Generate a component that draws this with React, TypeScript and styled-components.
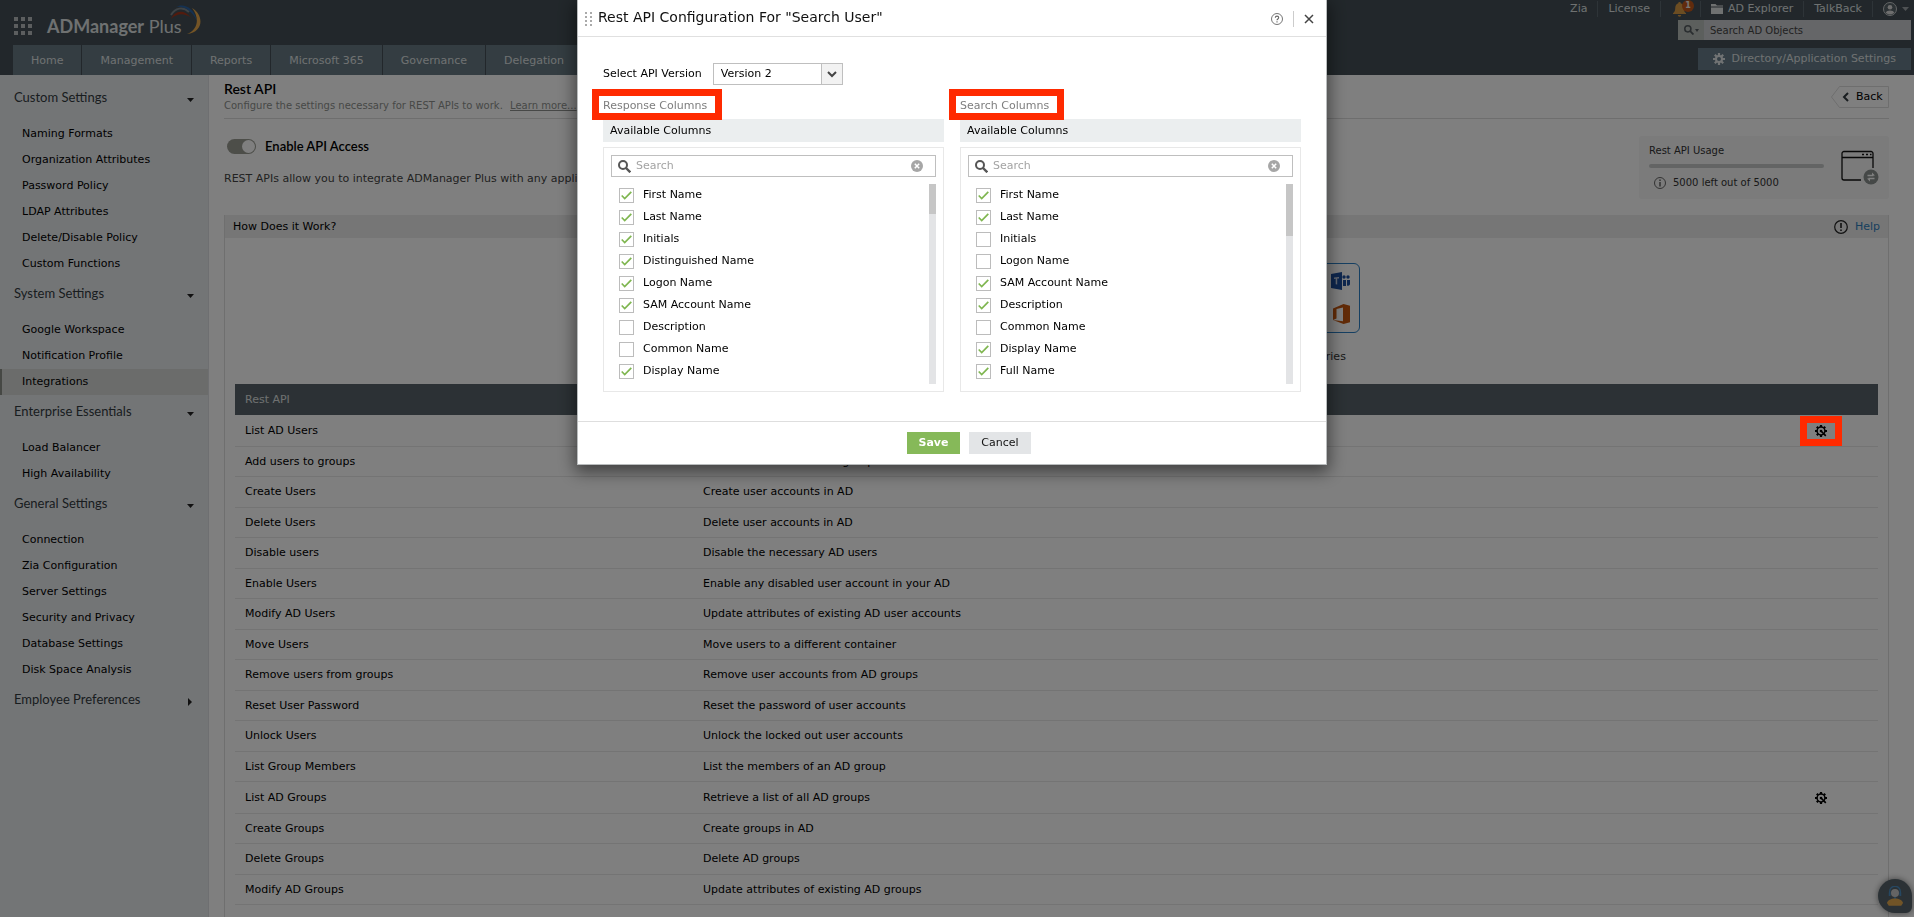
import React from 'react';
import styled, { createGlobalStyle } from 'styled-components';

const sans = '"DejaVu Sans", Verdana, sans-serif';
const display = 'Lato, "Open Sans", sans-serif';

const GlobalStyle = createGlobalStyle`
  * { box-sizing: border-box; }
  body {
    margin: 0;
    font-family: ${sans};
    font-size: 11px;
    line-height: 16px;
    color: #000;
    background: #fff;
  }
  button, input, select { font: inherit; color: inherit; margin: 0; }
  a { color: inherit; text-decoration: none; }
  ul { list-style: none; margin: 0; padding: 0; }
  h1, h2, p { margin: 0; font-weight: 400; }
  svg { display: block; }
`;

/* ---------- page shell ---------- */

const Page = styled.div`
  display: flex;
  flex-direction: column;
  min-height: 100vh;
`;

const Header = styled.header`
  display: flex;
  justify-content: space-between;
  height: 75px;
  background: #444f56;
  color: #dfe2e3;
`;

const HeaderLeft = styled.div`
  display: flex;
  flex-direction: column;
  justify-content: space-between;
  padding-left: 13px;
`;

const Brand = styled.div`
  display: flex;
  align-items: flex-start;
  padding-top: 4px;
`;

const AppsButton = styled.button`
  border: 0;
  padding: 0 1px;
  margin-top: 13px;
  background: none;
`;

const BrandName = styled.span`
  margin: 10px 0 0 14px;
  font-family: ${display};
  font-size: 18px;
  line-height: 24px;
  white-space: nowrap;
  b { font-weight: 700; }
`;

const BrandArc = styled.svg`
  margin-left: -12px;
`;

const Tabs = styled.nav`
  display: flex;
  gap: 1px;
`;

const Tab = styled.a`
  padding: 8px 18px 6px;
  background: #687a84;
`;

const HeaderRight = styled.div`
  display: flex;
  flex-direction: column;
  align-items: flex-end;
  padding-right: 3px;
`;

const UtilityBar = styled.div`
  display: flex;
  align-items: center;
  height: 18px;
  margin-bottom: 2px;
`;

const UtilityItem = styled.a`
  display: flex;
  align-items: center;
  gap: 5px;
  height: 16px;
  padding: 0 10px;
  border-left: 1px solid #5c6970;
  &:first-child { border-left: 0; }
  &:last-child { padding-right: 2px; }
`;

const BellWrap = styled.span`
  display: flex;
  position: relative;
  width: 18px;
  margin: 0 -1px 0 2px;
`;

const BellCount = styled.span`
  position: absolute;
  left: 9px;
  top: -2px;
  width: 12px;
  height: 12px;
  border-radius: 6px;
  background: #c2571a;
  color: #eee;
  font-size: 8px;
  line-height: 12px;
  font-weight: 700;
  text-align: center;
`;

const GlobalSearch = styled.form`
  display: flex;
  width: 233px;
  height: 20px;
  background: #cbcdd0;
`;

const GlobalSearchScope = styled.button`
  display: flex;
  align-items: center;
  justify-content: center;
  gap: 1px;
  width: 26px;
  border: 0;
  padding: 0;
  background: #b9beba;
`;

const GlobalSearchInput = styled.input`
  flex: 1;
  min-width: 0;
  border: 0;
  padding: 2px 6px 0;
  background: none;
  font-size: 10px;
  &::placeholder { color: #444; opacity: 1; }
`;

const SettingsButton = styled.button`
  display: flex;
  align-items: center;
  gap: 7px;
  height: 22px;
  margin-top: 8px;
  padding: 0 15px;
  border: 0;
  background: #687d8a;
`;

const Body = styled.div`
  display: flex;
  flex: 1;
`;

/* ---------- sidebar ---------- */

const Sidebar = styled.nav`
  flex: 0 0 209px;
  padding-top: 6px;
  background: #e7eaed;
  border-right: 1px solid #dcdfe2;
`;

const GroupHeading = styled.button`
  display: flex;
  align-items: center;
  justify-content: space-between;
  width: 100%;
  height: 40px;
  padding: 0 14px 8px;
  border: 0;
  background: none;
  color: #333b3f;
  font-family: ${display};
  font-size: 13px;
  svg { margin-top: 4px; }
`;

const SideLink = styled.a<{ $active?: boolean }>`
  display: block;
  height: 26px;
  padding: 5px 20px;
  border-left: 2px solid ${p => (p.$active ? '#8c9088' : 'transparent')};
  background: ${p => (p.$active ? '#d6d9d7' : 'none')};
`;

/* ---------- main ---------- */

const Main = styled.main`
  display: flex;
  flex-direction: column;
  flex: 1;
  min-width: 0;
  padding: 5px 25px 0 15px;
`;

const TitleBar = styled.div`
  display: flex;
  justify-content: space-between;
  height: 39px;
  border-bottom: 1px solid #dcdcdc;
`;

const PageTitle = styled.h1`
  font-family: ${display};
  font-size: 14px;
  line-height: 18px;
  font-weight: 600;
`;

const PageNote = styled.p`
  color: #8e918e;
  font-size: 10px;
  a { margin-left: 4px; text-decoration: underline; }
`;

const BackLink = styled.a`
  position: relative;
  display: flex;
  align-items: center;
  gap: 7px;
  width: 58px;
  height: 22px;
  margin-top: 6px;
  padding-left: 11px;
`;

const BackShape = styled.svg`
  position: absolute;
  inset: 0;
  z-index: -1;
`;

const Intro = styled.div`
  display: flex;
  justify-content: space-between;
  height: 96px;
  padding-top: 17px;
`;

const ToggleLabel = styled.label`
  display: flex;
  align-items: center;
  gap: 9px;
  margin: 1px 0 16px 3px;
  font-family: ${display};
  font-size: 13px;
  line-height: 18px;
  font-weight: 600;
`;

const Toggle = styled.input`
  appearance: none;
  width: 29px;
  height: 15px;
  border-radius: 8px;
  background: #9a9c93;
  &::before {
    content: '';
    display: block;
    width: 13px;
    height: 13px;
    margin: 1px 1px 1px 15px;
    border-radius: 7px;
    background: #fff;
  }
`;

const IntroText = styled.p`
  color: #444;
`;

const UsageCard = styled.section`
  display: flex;
  align-items: center;
  justify-content: space-between;
  width: 250px;
  height: 63px;
  padding: 0 10px;
  border-radius: 3px;
  background: #f6f6f6;
  color: #333;
  font-size: 10px;
`;

const UsageInfo = styled.div`
  display: flex;
  flex-direction: column;
  gap: 5px;
  width: 175px;
`;

const UsageTrack = styled.div`
  height: 4px;
  border-radius: 2px;
  background: #c6c9c9;
`;

const UsageLeft = styled.div`
  display: flex;
  align-items: center;
  gap: 7px;
  padding: 2px 5px;
`;

const Panel = styled.section`
  display: flex;
  flex-direction: column;
  flex: 1;
  border: 1px solid #dedede;
  border-width: 0 1px;
`;

const PanelHead = styled.div`
  display: flex;
  justify-content: space-between;
  height: 23px;
  padding: 4px 8px;
  background: #ececec;
`;

const HelpLink = styled.a`
  display: flex;
  align-items: center;
  gap: 7px;
  color: #2f7fbd;
`;

const Diagram = styled.div`
  display: flex;
  justify-content: flex-end;
  height: 146px;
  padding: 25px 528px 0 0;
`;

const DiagramItem = styled.div`
  display: flex;
  flex-direction: column;
  align-items: center;
  gap: 16px;
  color: #333;
`;

const DiagramBox = styled.div`
  display: flex;
  flex-direction: column;
  align-items: flex-end;
  justify-content: space-between;
  width: 88px;
  height: 70px;
  padding: 8px 9px;
  border: 1px solid #2b7fc4;
  border-radius: 6px;
`;

const ApiTable = styled.table`
  margin: 0 10px;
  border-collapse: separate;
  border-spacing: 0;
  table-layout: fixed;
  text-align: left;
  th {
    height: 31px;
    padding: 0 10px;
    background: #58636a;
    color: #dfe1e1;
    font-weight: 400;
  }
  td {
    padding: 0 10px;
    border-bottom: 1px solid #e8e8e8;
  }
`;

const NameCol = styled.col` width: 458px; `;
const ActionCol = styled.col` width: 114px; `;

const ApiRow = styled.tr<{ $action: boolean }>`
  height: ${p => (p.$action ? 32 : 31)}px;
  &:nth-child(even) { height: 30px; }
`;

const RowAction = styled.button`
  position: relative;
  display: block;
  width: 20px;
  height: 16px;
  margin: 0 auto;
  border: 0;
  padding: 2px 4px;
  background: none;
`;

/* ---------- callouts ---------- */

const Callout = styled.span`
  position: absolute;
  z-index: 20;
  border: 7px solid #ff2a00;
`;

const ActionCallout = styled(Callout)`
  inset: -7px -11px;
`;

const TitleCallout = styled(Callout)`
  inset: -9px -15px -6px -11px;
`;

/* ---------- dialog ---------- */

const Overlay = styled.div`
  position: fixed;
  inset: 0;
  z-index: 10;
  display: flex;
  align-items: flex-start;
  justify-content: center;
  padding-right: 10px;
  background: rgba(0, 0, 0, 0.5);
`;

const Dialog = styled.div`
  width: 750px;
  border: 1px solid #b9bcbd;
  border-top: 0;
  background: #fff;
  box-shadow: 0 5px 16px 2px rgba(0, 0, 0, 0.5);
`;

const DialogHead = styled.div`
  display: flex;
  align-items: center;
  justify-content: space-between;
  height: 37px;
  padding: 0 12px 2px 7px;
  border-bottom: 1px solid #e0e0e0;
`;

const DialogTitle = styled.h2`
  display: flex;
  align-items: center;
  gap: 6px;
  font-size: 14px;
  line-height: 18px;
  color: #111;
  svg { margin-top: 4px; }
`;

const DialogTools = styled.div`
  display: flex;
  align-items: center;
  gap: 10px;
  padding-top: 4px;
`;

const ToolDivider = styled.span`
  height: 16px;
  border-left: 1px solid #ccc;
`;

const IconButton = styled.button`
  border: 0;
  padding: 0;
  background: none;
`;

const DialogBody = styled.div`
  padding: 26px 25px 29px;
`;

const VersionRow = styled.div`
  display: flex;
  align-items: center;
  gap: 11px;
`;

const SelectWrap = styled.div`
  position: relative;
  width: 130px;
`;

const Select = styled.select`
  display: block;
  appearance: none;
  width: 100%;
  height: 22px;
  padding: 0 28px 0 7px;
  border: 1px solid #bfbfbf;
  border-radius: 0;
  background: #fff;
`;

const SelectArrow = styled.span`
  position: absolute;
  inset: 0 0 0 auto;
  display: flex;
  align-items: center;
  justify-content: center;
  width: 22px;
  border: 1px solid #bfbfbf;
  background: #f2f2f2;
  pointer-events: none;
`;

const Columns = styled.div`
  display: grid;
  grid-template-columns: 1fr 1fr;
  gap: 16px;
  padding-top: 13px;
`;

const ColumnTitle = styled.h2`
  position: relative;
  width: max-content;
  margin-bottom: 5px;
  color: #7d7d7d;
  font-size: 11px;
`;

const AvailableBar = styled.div`
  height: 23px;
  margin-bottom: 5px;
  padding: 4px 7px;
  background: #ebeeef;
`;

const ColumnBox = styled.div`
  padding: 7px;
  border: 1px solid #e8e8e8;
`;

const ColumnSearch = styled.label`
  display: flex;
  align-items: center;
  gap: 5px;
  height: 22px;
  padding: 0 12px 0 6px;
  border: 1px solid #bfbfbf;
`;

const ColumnSearchInput = styled.input`
  flex: 1;
  min-width: 0;
  border: 0;
  padding: 0;
  outline: 0;
  &::placeholder { color: #a3a3a3; opacity: 1; }
`;

const ListArea = styled.div`
  display: flex;
  height: 200px;
  margin-top: 7px;
`;

const OptionList = styled.ul`
  flex: 1;
`;

const Option = styled.label`
  display: flex;
  align-items: center;
  gap: 9px;
  height: 22px;
  padding-left: 8px;
`;

const CheckCell = styled.span`
  display: grid;
  place-items: center;
  > * { grid-area: 1 / 1; }
  svg { pointer-events: none; }
`;

const CheckBox = styled.input`
  appearance: none;
  width: 15px;
  height: 15px;
  border: 1px solid #bcbcbc;
  background: #fff;
`;

const ScrollTrack = styled.div`
  width: 7px;
  background: #e3e4e6;
`;

const ScrollThumb = styled.div<{ $size: number }>`
  height: ${p => p.$size}px;
  background: #c6c6c6;
`;

const DialogFoot = styled.div`
  display: flex;
  justify-content: center;
  gap: 9px;
  padding: 10px 0 10px 34px;
  border-top: 1px solid #dedede;
`;

const FootButton = styled.button<{ $primary?: boolean }>`
  height: 22px;
  width: ${p => (p.$primary ? 53 : 62)}px;
  padding: 0;
  border: 0;
  background: ${p => (p.$primary ? '#86b959' : '#e3e5e7')};
  color: ${p => (p.$primary ? '#fff' : '#111')};
  font-weight: ${p => (p.$primary ? 700 : 400)};
`;

const ChatButton = styled.button`
  position: fixed;
  right: 2px;
  bottom: 4px;
  display: flex;
  align-items: center;
  justify-content: center;
  width: 34px;
  height: 34px;
  border: 0;
  padding: 0;
  border-radius: 17px 17px 6px 17px;
  background: #56636b;
  box-shadow: 0 0 6px rgba(0, 0, 0, 0.5);
`;

/* ---------- icons ---------- */

const AppsIcon = () => (
  <svg width="18" height="18" fill="#b8bcbe">
    {[0, 7, 14].map(y => [0, 7, 14].map(x => <rect key={`${x}-${y}`} x={x} y={y} width="4" height="4" />))}
  </svg>
);

const LogoArc = () => (
  <BrandArc width="32" height="32" viewBox="0 0 32 32" fill="none">
    <path d="M1 11C5 4 13 2 19 8" stroke="#7d868c" strokeWidth="2" />
    <path d="M1 15C4 7 14 4 21 14C15 9 7 9 1 15Z" fill="#a5361c" />
    <path d="M6 3C12 -1 24 2 27 17C22 7 15 2 6 3Z" fill="#2a63a5" />
    <path d="M22 4C34 11 34 28 17 30C28 26 30 14 22 4Z" fill="#e8a94c" />
  </BrandArc>
);

const CaretIcon = ({ side = false }: { side?: boolean }) => (
  <svg width="8" height="10" fill="#222">
    {side ? <path d="M2 2l4 4l-4 4z" /> : <path d="M1 4h7L4.500 8z" />}
  </svg>
);

const SmallCaret = () => (
  <svg width="7" height="4" fill="#9ea5a9"><path d="M0 0h7L3.500 4z" /></svg>
);

const ScopeCaret = () => (
  <svg width="4" height="3" fill="#555c60"><path d="M0 0h4L2 3z" /></svg>
);

const BellIcon = () => (
  <svg width="13" height="15" viewBox="0 0 13 15" fill="#d99a45">
    <path d="M6.500 0a1.200 1.200 0 0 1 1.200 1.300C10 2 10.800 4 10.800 6.500c0 2.500.7 3.500 2.200 4.700V12H0v-.8C1.500 10 2.200 9 2.200 6.500 2.200 4 3 2 5.300 1.300A1.200 1.200 0 0 1 6.500 0zM4.800 13h3.400a1.700 1.700 0 0 1-3.400 0z" />
  </svg>
);

const FolderIcon = () => (
  <svg width="12" height="10" fill="#dfe2e3"><path d="M0 0h4.500l1.500 1.500H12V2.500H0zM0 3.500h12V10H0z" /></svg>
);

const UserIcon = () => (
  <svg width="14" height="14" viewBox="0 0 14 14">
    <circle cx="7" cy="7" r="6.500" fill="#59646a" stroke="#c6cacc" />
    <circle cx="7" cy="5.300" r="2.300" fill="#ddd" />
    <path d="M2.800 10.800c.8-3 7.600-3 8.400 0A5.800 5.800 0 0 1 2.800 10.800z" fill="#ddd" />
  </svg>
);

const SearchIcon = ({ size, color }: { size: number; color: string }) => (
  <svg width={size} height={size} viewBox="0 0 13 13" fill="none" stroke={color} strokeWidth="2">
    <circle cx="5" cy="5" r="4" />
    <path d="M8 8l4.300 4.300" strokeWidth="2.400" />
  </svg>
);

const GearIcon = () => (
  <svg width="12" height="12" viewBox="0 0 12 12">
    <g stroke="#e2e6e8" strokeWidth="2.200">
      <path d="M6 0v12M0 6h12M1.800 1.800l8.400 8.400M10.200 1.800l-8.400 8.400" />
    </g>
    <circle cx="6" cy="6" r="4" fill="#e2e6e8" />
    <circle cx="6" cy="6" r="2" fill="#687d8a" />
  </svg>
);

const ConfigIcon = () => (
  <svg width="12" height="12" viewBox="0 0 12 12" fill="none" stroke="#000">
    <path d="M6 0v2M0 6h2M10 6h2M6 10v2M1.800 1.800l1.400 1.400M10.200 1.800L8.800 3.200M1.800 10.200l1.400-1.400" strokeWidth="2.200" />
    <circle cx="6" cy="6" r="3.900" strokeWidth="1.500" />
    <path d="M6 6l4.800 4.800" strokeWidth="1.700" />
    <circle cx="6" cy="6" r="1.300" fill="#000" stroke="none" />
  </svg>
);

const ChevronLeft = () => (
  <svg width="7" height="10" fill="none" stroke="#333b40" strokeWidth="2"><path d="M6 1L2 5l4 4" /></svg>
);

const InfoIcon = () => (
  <svg width="12" height="12" viewBox="0 0 12 12" fill="none" stroke="#666">
    <circle cx="6" cy="6" r="5.500" />
    <path d="M6 2.500v1.500M6 5v4.500" strokeWidth="1.500" />
  </svg>
);

const AlertIcon = () => (
  <svg width="14" height="14" viewBox="0 0 14 14" fill="none" stroke="#222">
    <circle cx="7" cy="7" r="6.300" strokeWidth="1.200" />
    <path d="M7 3v5M7 9.500v1.500" strokeWidth="1.600" />
  </svg>
);

const UsageWindowIcon = () => (
  <svg width="38" height="35" viewBox="0 0 38 35" fill="none" stroke="#111" strokeWidth="1.300">
    <path d="M32 18V3.500a2 2 0 0 0-2-2H3a2 2 0 0 0-2 2V28a2 2 0 0 0 2 2h17M1 7.500h31" />
    <path d="M21 4.500h2M25 4.500h2M29 4.500h1.500" strokeWidth="1.500" />
    <circle cx="30" cy="27" r="7.500" fill="#8a918f" stroke="none" />
    <path d="M26.500 25.500h6M27.500 28.500h6" stroke="#fff" strokeWidth="1.500" />
    <path d="M31 22.500l3 3h-3zM29 31.500l-3-3h3z" fill="#fff" stroke="none" />
  </svg>
);

const TeamsIcon = () => (
  <svg width="19" height="18" viewBox="0 0 19 18" fill="#1d4f9e">
    <path d="M0 2l11-2v18L0 16z" />
    <path d="M3 5.500l5-.5v1.500l-1.800.1V12.500L4.700 12.300V6.800L3 7z" fill="#c8d2e4" />
    <circle cx="13" cy="5" r="1.700" /><circle cx="17" cy="5" r="1.700" />
    <path d="M12 8h3v6h-3zM16 8h3v4a2 2 0 0 1-3 1.500z" />
  </svg>
);

const OfficeIcon = () => (
  <svg width="17" height="20" viewBox="0 0 17 20" fill="#c4560f">
    <path d="M0 4.500L10.500 0 17 1.800v16.400L10.500 20 0 16l10 1.200V3.500L3.500 5v9.500L0 16z" />
  </svg>
);

const DragIcon = () => (
  <svg width="7" height="14" fill="#aaa">
    {[0, 4, 8, 12].map(y => [0, 5].map(x => <rect key={`${x}-${y}`} x={x} y={y} width="2" height="2" />))}
  </svg>
);

const QuestionIcon = () => (
  <svg width="12" height="12" viewBox="0 0 12 12" fill="none" stroke="#666">
    <circle cx="6" cy="6" r="5.500" strokeWidth=".9" />
    <path d="M4.300 4.800c0-2.200 3.400-2.200 3.400 0C7.700 6 6 6 6 7.300M6 8.300v1.200" strokeWidth="1.100" />
  </svg>
);

const CloseIcon = () => (
  <svg width="10" height="10" fill="none" stroke="#444" strokeWidth="1.500"><path d="M1 1l8 8M9 1L1 9" /></svg>
);

const ChevronDown = () => (
  <svg width="10" height="7" fill="none" stroke="#444" strokeWidth="2"><path d="M1 1l4 4l4-4" /></svg>
);

const ClearIcon = () => (
  <svg width="12" height="12" viewBox="0 0 12 12">
    <circle cx="6" cy="6" r="6" fill="#a6a6a6" />
    <path d="M3.800 3.800l4.400 4.400M8.200 3.800L3.800 8.200" stroke="#fff" strokeWidth="1.500" />
  </svg>
);

const TickIcon = () => (
  <svg width="11" height="9" viewBox="0 0 11 9" fill="none" stroke="#7fb650" strokeWidth="1.700">
    <path d="M.7 4.500l3 3L10.300.8" />
  </svg>
);

const AgentIcon = () => (
  <svg width="16" height="20" viewBox="0 0 18 22">
    <path d="M3 9V6a6 6 0 0 1 12 0v3" fill="none" stroke="#4c8fc4" strokeWidth="1.500" />
    <circle cx="9" cy="7.500" r="4.500" fill="#c9c9c9" />
    <path d="M2 7h2v4H2zM14 7h2v4h-2zM8 12h2v3H8z" fill="#4c8fc4" />
    <path d="M0 19c1-7 17-7 18 0l-2 3H2z" fill="#e3a94f" />
  </svg>
);

/* ---------- data ---------- */

const tabs = ['Home', 'Management', 'Reports', 'Microsoft 365', 'Governance', 'Delegation'];

const groups = [
  {
    title: 'Custom Settings',
    items: ['Naming Formats', 'Organization Attributes', 'Password Policy', 'LDAP Attributes', 'Delete/Disable Policy', 'Custom Functions'],
  },
  { title: 'System Settings', items: ['Google Workspace', 'Notification Profile', 'Integrations'] },
  { title: 'Enterprise Essentials', items: ['Load Balancer', 'High Availability'] },
  {
    title: 'General Settings',
    items: ['Connection', 'Zia Configuration', 'Server Settings', 'Security and Privacy', 'Database Settings', 'Disk Space Analysis'],
  },
  { title: 'Employee Preferences', items: [] },
];

const apis: { name: string; text: string; action?: 'plain' | 'marked' }[] = [
  { name: 'List AD Users', text: 'Retrieve a list of all AD users', action: 'marked' },
  { name: 'Add users to groups', text: 'Add user accounts to AD groups' },
  { name: 'Create Users', text: 'Create user accounts in AD' },
  { name: 'Delete Users', text: 'Delete user accounts in AD' },
  { name: 'Disable users', text: 'Disable the necessary AD users' },
  { name: 'Enable Users', text: 'Enable any disabled user account in your AD' },
  { name: 'Modify AD Users', text: 'Update attributes of existing AD user accounts' },
  { name: 'Move Users', text: 'Move users to a different container' },
  { name: 'Remove users from groups', text: 'Remove user accounts from AD groups' },
  { name: 'Reset User Password', text: 'Reset the password of user accounts' },
  { name: 'Unlock Users', text: 'Unlock the locked out user accounts' },
  { name: 'List Group Members', text: 'List the members of an AD group' },
  { name: 'List AD Groups', text: 'Retrieve a list of all AD groups', action: 'plain' },
  { name: 'Create Groups', text: 'Create groups in AD' },
  { name: 'Delete Groups', text: 'Delete AD groups' },
  { name: 'Modify AD Groups', text: 'Update attributes of existing AD groups' },
];

type Field = [label: string, checked: boolean];

const responseFields: Field[] = [
  ['First Name', true], ['Last Name', true], ['Initials', true], ['Distinguished Name', true],
  ['Logon Name', true], ['SAM Account Name', true], ['Description', false], ['Common Name', false],
  ['Display Name', true],
];

const searchFields: Field[] = [
  ['First Name', true], ['Last Name', true], ['Initials', false], ['Logon Name', false],
  ['SAM Account Name', true], ['Description', true], ['Common Name', false], ['Display Name', true],
  ['Full Name', true],
];

/* ---------- parts ---------- */

function CheckOption({ label, initial }: { label: string; initial: boolean }) {
  const [on, setOn] = React.useState(initial);
  return (
    <li>
      <Option>
        <CheckCell>
          <CheckBox type="checkbox" checked={on} onChange={e => setOn(e.target.checked)} />
          {on && <TickIcon />}
        </CheckCell>
        {label}
      </Option>
    </li>
  );
}

function ColumnPicker({ title, fields, thumb }: { title: string; fields: Field[]; thumb: number }) {
  return (
    <section>
      <ColumnTitle>{title}<TitleCallout /></ColumnTitle>
      <AvailableBar>Available Columns</AvailableBar>
      <ColumnBox>
        <ColumnSearch>
          <SearchIcon size={13} color="#555" />
          <ColumnSearchInput type="text" placeholder="Search" aria-label={`Search ${title}`} />
          <IconButton type="button" aria-label="Clear"><ClearIcon /></IconButton>
        </ColumnSearch>
        <ListArea>
          <OptionList>
            {fields.map(([label, checked]) => <CheckOption key={label} label={label} initial={checked} />)}
          </OptionList>
          <ScrollTrack><ScrollThumb $size={thumb} /></ScrollTrack>
        </ListArea>
      </ColumnBox>
    </section>
  );
}

export default function App() {
  return (
    <Page>
      <GlobalStyle />
      <Header>
        <HeaderLeft>
          <Brand>
            <AppsButton aria-label="Apps"><AppsIcon /></AppsButton>
            <BrandName><b>ADManager</b> Plus</BrandName>
            <LogoArc />
          </Brand>
          <Tabs>
            {tabs.map(t => <Tab key={t} href="#">{t}</Tab>)}
          </Tabs>
        </HeaderLeft>
        <HeaderRight>
          <UtilityBar>
            <UtilityItem href="#">Zia</UtilityItem>
            <UtilityItem href="#">License</UtilityItem>
            <UtilityItem href="#" aria-label="Notifications">
              <BellWrap><BellIcon /><BellCount>1</BellCount></BellWrap>
            </UtilityItem>
            <UtilityItem href="#"><FolderIcon />AD Explorer</UtilityItem>
            <UtilityItem href="#">TalkBack</UtilityItem>
            <UtilityItem href="#" aria-label="Account"><UserIcon /><SmallCaret /></UtilityItem>
          </UtilityBar>
          <GlobalSearch>
            <GlobalSearchScope type="button" aria-label="Search scope">
              <SearchIcon size={10} color="#555c60" /><ScopeCaret />
            </GlobalSearchScope>
            <GlobalSearchInput type="text" placeholder="Search AD Objects" aria-label="Search AD Objects" />
          </GlobalSearch>
          <SettingsButton><GearIcon />Directory/Application Settings</SettingsButton>
        </HeaderRight>
      </Header>

      <Body>
        <Sidebar>
          {groups.map(g => (
            <div key={g.title}>
              <GroupHeading>{g.title}<CaretIcon side={g.items.length === 0} /></GroupHeading>
              {g.items.map(i => <SideLink key={i} href="#" $active={i === 'Integrations'}>{i}</SideLink>)}
            </div>
          ))}
        </Sidebar>

        <Main>
          <TitleBar>
            <div>
              <PageTitle>Rest API</PageTitle>
              <PageNote>
                Configure the settings necessary for REST APIs to work. <a href="#">Learn more...</a>
              </PageNote>
            </div>
            <BackLink href="#">
              <BackShape width="58" height="22" viewBox="0 0 58 22" fill="none" stroke="#dcdcdc">
                <path d="M8.500.5h49v21h-49L.5 11z" />
              </BackShape>
              <span><ChevronLeft /></span>Back
            </BackLink>
          </TitleBar>

          <Intro>
            <div>
              <ToggleLabel><Toggle type="checkbox" defaultChecked />Enable API Access</ToggleLabel>
              <IntroText>REST APIs allow you to integrate ADManager Plus with any application.</IntroText>
            </div>
            <UsageCard>
              <UsageInfo>
                <span>Rest API Usage</span>
                <UsageTrack />
                <UsageLeft><InfoIcon />5000 left out of 5000</UsageLeft>
              </UsageInfo>
              <UsageWindowIcon />
            </UsageCard>
          </Intro>

          <Panel>
            <PanelHead>
              How Does it Work?
              <HelpLink href="#"><AlertIcon />Help</HelpLink>
            </PanelHead>
            <Diagram>
              <DiagramItem>
                <DiagramBox><TeamsIcon /><OfficeIcon /></DiagramBox>
                <span>Directories</span>
              </DiagramItem>
            </Diagram>
            <ApiTable>
              <colgroup><NameCol /><col /><ActionCol /></colgroup>
              <thead>
                <tr><th>Rest API</th><th>Description</th><th aria-label="Configure" /></tr>
              </thead>
              <tbody>
                {apis.map(a => (
                  <ApiRow key={a.name} $action={!!a.action}>
                    <td>{a.name}</td>
                    <td>{a.text}</td>
                    <td>
                      {a.action && (
                        <RowAction aria-label={`Configure ${a.name}`}>
                          <ConfigIcon />
                          {a.action === 'marked' && <ActionCallout />}
                        </RowAction>
                      )}
                    </td>
                  </ApiRow>
                ))}
              </tbody>
            </ApiTable>
          </Panel>
        </Main>
      </Body>

      <ChatButton aria-label="Chat"><AgentIcon /></ChatButton>

      <Overlay>
        <Dialog role="dialog" aria-labelledby="dialog-title">
          <DialogHead>
            <DialogTitle id="dialog-title"><DragIcon />Rest API Configuration For "Search User"</DialogTitle>
            <DialogTools>
              <IconButton aria-label="Help"><QuestionIcon /></IconButton>
              <ToolDivider />
              <IconButton aria-label="Close"><CloseIcon /></IconButton>
            </DialogTools>
          </DialogHead>
          <DialogBody>
            <VersionRow>
              <label htmlFor="api-version">Select API Version</label>
              <SelectWrap>
                <Select id="api-version" defaultValue="2">
                  <option value="1">Version 1</option>
                  <option value="2">Version 2</option>
                </Select>
                <SelectArrow><ChevronDown /></SelectArrow>
              </SelectWrap>
            </VersionRow>
            <Columns>
              <ColumnPicker title="Response Columns" fields={responseFields} thumb={30} />
              <ColumnPicker title="Search Columns" fields={searchFields} thumb={52} />
            </Columns>
          </DialogBody>
          <DialogFoot>
            <FootButton $primary>Save</FootButton>
            <FootButton>Cancel</FootButton>
          </DialogFoot>
        </Dialog>
      </Overlay>
    </Page>
  );
}
